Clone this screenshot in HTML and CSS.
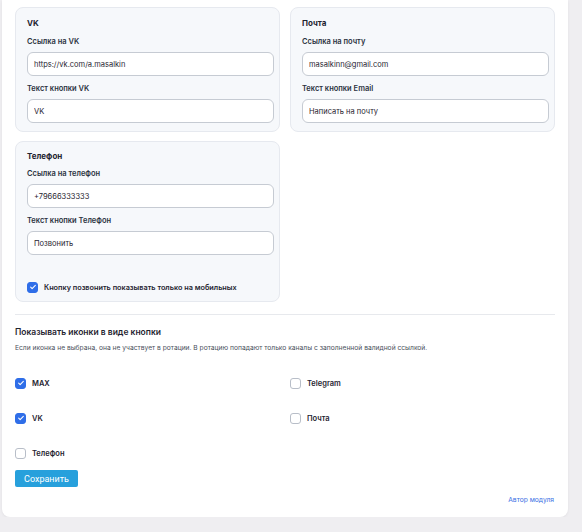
FILE: index.html
```html
<!DOCTYPE html>
<html lang="ru">
<head>
    <meta charset="UTF-8">
    <title>Настройки модуля</title>
    <link rel="stylesheet" href="styles.css">
</head>
<body>

<div class="panel">
    <!-- каналы -->
    <div class="cards">
        <div class="card">
            <div class="card-title">VK</div>
            <div class="field">
                <label class="field-label">Ссылка на VK</label>
                <input class="field-input" type="text" value="https://vk.com/a.masalkin">
            </div>
            <div class="field">
                <label class="field-label">Текст кнопки VK</label>
                <input class="field-input" type="text" value="VK">
            </div>
        </div>

        <div class="card">
            <div class="card-title">Почта</div>
            <div class="field">
                <label class="field-label">Ссылка на почту</label>
                <input class="field-input" type="text" value="masalkinn@gmail.com">
            </div>
            <div class="field">
                <label class="field-label">Текст кнопки Email</label>
                <input class="field-input" type="text" value="Написать на почту">
            </div>
        </div>

        <div class="card card-phone">
            <div class="card-title">Телефон</div>
            <div class="field">
                <label class="field-label">Ссылка на телефон</label>
                <input class="field-input" type="text" value="+79666333333">
            </div>
            <div class="field">
                <label class="field-label">Текст кнопки Телефон</label>
                <input class="field-input" type="text" value="Позвонить">
            </div>
            <label class="check check-mobile">
                <span class="box checked">
                    <svg viewBox="0 0 12 12" width="8" height="8"><path d="M2.5 6.2l2.2 2.2 4.8-4.9" fill="none" stroke="#fff" stroke-width="1.6" stroke-linecap="round" stroke-linejoin="round"/></svg>
                </span>
                Кнопку позвонить показывать только на мобильных
            </label>
        </div>
    </div>

    <div class="divider"></div>

    <!-- иконки -->
    <div class="section-title">Показывать иконки в виде кнопки</div>
    <div class="section-hint">Если иконка не выбрана, она не участвует в ротации. В ротацию попадают только каналы с заполненной валидной ссылкой.</div>

    <div class="icon-grid">
        <label class="check">
            <span class="box checked">
                <svg viewBox="0 0 12 12" width="8" height="8"><path d="M2.5 6.2l2.2 2.2 4.8-4.9" fill="none" stroke="#fff" stroke-width="1.6" stroke-linecap="round" stroke-linejoin="round"/></svg>
            </span>
            MAX
        </label>
        <label class="check">
            <span class="box"></span>
            Telegram
        </label>
        <label class="check">
            <span class="box checked">
                <svg viewBox="0 0 12 12" width="8" height="8"><path d="M2.5 6.2l2.2 2.2 4.8-4.9" fill="none" stroke="#fff" stroke-width="1.6" stroke-linecap="round" stroke-linejoin="round"/></svg>
            </span>
            VK
        </label>
        <label class="check">
            <span class="box"></span>
            Почта
        </label>
        <label class="check">
            <span class="box"></span>
            Телефон
        </label>
    </div>

    <button class="save-btn" type="button">Сохранить</button>

    <div class="footer">
        <a class="author-link" href="#">Автор модуля</a>
    </div>
</div>

</body>
</html>
```

FILE: styles.css
```css
:root {
    --text-color: #1f2430;
    --label-color: #2b3240;
    --hint-color: #4a505c;
    --card-bg: #f6f8fb;
    --card-border: #e6e9ef;
    --input-border: #c6cbd3;
    --check-blue: #2f6ee8;
    --save-blue: #27a0dc;
    --link-blue: #3a6fe4;
}

body {
    margin: 0;
    font-family: Inter, "Noto Sans", sans-serif;
    background-color: #efeef1;
    color: var(--text-color);
}

.panel {
    width: 566px;
    margin-left: 2px;
    box-sizing: border-box;
    padding: 7px 13px 12px 13px;
    background-color: #fff;
    border-radius: 0 0 8px 8px;
    box-shadow: 0 1px 3px rgba(0, 0, 0, 0.06);
}

/* карточки каналов */
.cards {
    display: grid;
    grid-template-columns: 1fr 1fr;
    column-gap: 10px;
    row-gap: 9px;
}

.card {
    display: flex;
    flex-direction: column;
    padding: 10px 5px 8px 11px;
    background-color: var(--card-bg);
    border: 1px solid var(--card-border);
    border-radius: 8px;
}

.card-phone {
    padding-top: 9px;
}

.card-title {
    font-size: 8px;
    line-height: 10px;
    font-weight: 700;
    margin-bottom: 9px;
}

.card-phone .card-title {
    margin-bottom: 8px;
}

.field {
    display: flex;
    flex-direction: column;
}

.field + .field {
    margin-top: 8px;
}

.field-label {
    font-size: 7.5px;
    line-height: 10px;
    font-weight: 600;
    color: var(--label-color);
    margin-bottom: 5px;
}

.field-input {
    height: 24px;
    box-sizing: border-box;
    padding: 0 6px;
    border: 1px solid var(--input-border);
    border-radius: 6px;
    background: #fff;
    font-family: inherit;
    font-size: 7.5px;
    color: var(--text-color);
    outline: none;
}

/* чекбоксы */
.check {
    display: flex;
    align-items: center;
    gap: 6px;
    height: 12px;
    font-size: 7.5px;
    font-weight: 600;
    color: var(--text-color);
}

.check-mobile {
    margin-top: 26px;
    font-size: 7.3px;
}

.box {
    display: flex;
    align-items: center;
    justify-content: center;
    width: 11px;
    height: 11px;
    box-sizing: border-box;
    border: 1px solid #b8bec8;
    border-radius: 3px;
    background: #fff;
}

.box.checked {
    border-color: var(--check-blue);
    background: var(--check-blue);
}

.divider {
    height: 1px;
    background-color: #e7e9ed;
    margin-top: 12px;
}

.section-title {
    margin-top: 11px;
    font-size: 8.5px;
    line-height: 12px;
    font-weight: 600;
}

.section-hint {
    margin-top: 5px;
    font-size: 6.7px;
    line-height: 10px;
    color: var(--hint-color);
}

.icon-grid {
    display: grid;
    grid-template-columns: 1fr 1fr;
    column-gap: 10px;
    row-gap: 23px;
    margin-top: 24px;
}

.save-btn {
    display: block;
    margin-top: 11px;
    width: 63px;
    height: 17px;
    padding: 0;
    border: none;
    border-radius: 2px;
    background-color: var(--save-blue);
    color: #fff;
    font-family: Roboto, sans-serif;
    font-size: 9px;
    cursor: pointer;
}

.footer {
    display: flex;
    justify-content: flex-end;
    margin-top: 8px;
    padding-right: 1px;
}

.author-link {
    font-size: 6.7px;
    line-height: 10px;
    color: var(--link-blue);
    text-decoration: none;
}
```
